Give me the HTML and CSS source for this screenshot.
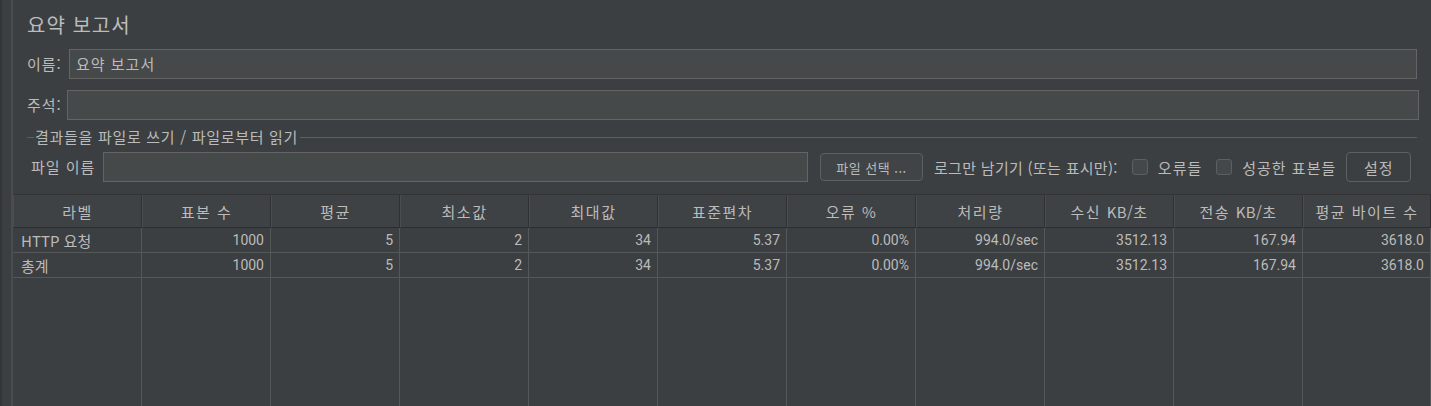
FILE: index.html
```html
<!DOCTYPE html>
<html lang="ko">
<head>
<meta charset="utf-8">
<title>요약 보고서</title>
<link rel="stylesheet" href="styles.css">
</head>
<body>
<div class="app">
  <div class="side"></div>
  <div class="main">
    <div class="form">
      <h1 class="title">요약 보고서</h1>
      <div class="row name-row">
        <label class="lbl">이름:</label>
        <div class="input">요약 보고서</div>
      </div>
      <div class="row comment-row">
        <label class="lbl">주석:</label>
        <div class="input"></div>
      </div>
      <div class="group">
        <div class="legend"><span>결과들을 파일로 쓰기 / 파일로부터 읽기</span></div>
        <div class="row file-row">
          <label class="lbl file-lbl">파일 이름</label>
          <div class="input file-input"></div>
          <button class="btn browse">파일 선택 ...</button>
          <span class="log-lbl">로그만 남기기 (또는 표시만):</span>
          <span class="check"><span class="box"></span>오류들</span>
          <span class="check"><span class="box"></span>성공한 표본들</span>
          <button class="btn settings">설정</button>
        </div>
      </div>
    </div>
    <div class="table">
      <div class="th">라벨</div>
      <div class="th">표본 수</div>
      <div class="th">평균</div>
      <div class="th">최소값</div>
      <div class="th">최대값</div>
      <div class="th">표준편차</div>
      <div class="th">오류 %</div>
      <div class="th">처리량</div>
      <div class="th">수신 <span class="lat">KB/</span>초</div>
      <div class="th">전송 <span class="lat">KB/</span>초</div>
      <div class="th">평균 바이트 수</div>

      <div class="td l">HTTP 요청</div>
      <div class="td">1000</div>
      <div class="td">5</div>
      <div class="td">2</div>
      <div class="td">34</div>
      <div class="td">5.37</div>
      <div class="td">0.00%</div>
      <div class="td">994.0/sec</div>
      <div class="td">3512.13</div>
      <div class="td">167.94</div>
      <div class="td">3618.0</div>

      <div class="td l">총계</div>
      <div class="td">1000</div>
      <div class="td">5</div>
      <div class="td">2</div>
      <div class="td">34</div>
      <div class="td">5.37</div>
      <div class="td">0.00%</div>
      <div class="td">994.0/sec</div>
      <div class="td">3512.13</div>
      <div class="td">167.94</div>
      <div class="td">3618.0</div>

      <div class="tf"></div><div class="tf"></div><div class="tf"></div><div class="tf"></div>
      <div class="tf"></div><div class="tf"></div><div class="tf"></div><div class="tf"></div>
      <div class="tf"></div><div class="tf"></div><div class="tf"></div>
    </div>
  </div>
</div>
</body>
</html>
```
FILE: styles.css
```css
html, body {
  margin: 0;
  padding: 0;
  background: #3c3f41;
  color: #bbbbbb;
  font-family: "Noto Sans CJK KR", "Noto Sans", sans-serif;
  font-size: 15px;
  letter-spacing: 1px;
  overflow: hidden;
}
.app {
  display: flex;
  width: 1431px;
  height: 406px;
}
.side {
  width: 9px;
  flex: none;
  background: #3c3f41;
  border-left: 2px solid #333537;
  border-right: 2px solid #4a4d4f;
}
.main {
  flex: 1;
  display: flex;
  flex-direction: column;
  min-width: 0;
}
.form {
  padding: 0 12px 0 14px;
}
.title {
  margin: 0;
  font-size: 20px;
  font-weight: normal;
  line-height: 26px;
  padding-top: 12px;
  color: #bbbbbb;
}
.row {
  display: flex;
  align-items: center;
}
.lbl {
  line-height: 20px;
}
.input {
  flex: 1;
  box-sizing: border-box;
  background: #45494a;
  border: 1px solid #646464;
  height: 30px;
  line-height: 28px;
  padding-left: 6px;
  color: #bbbbbb;
}
.name-row { margin-top: 11px; }
.name-row .lbl { width: 42px; }
.name-row .input { margin-right: 2px; }
.comment-row { margin-top: 11px; }
.comment-row .lbl { width: 40px; }
.group {
  margin-top: 8px;
  margin-right: 2px;
}
.legend {
  display: flex;
  align-items: center;
  height: 18px;
  letter-spacing: 0.7px;
}
.legend::before {
  content: "";
  width: 7px;
  border-top: 1px solid #5e6060;
}
.legend::after {
  content: "";
  flex: 1;
  border-top: 1px solid #5e6060;
}
.legend span {
  padding: 0 2px 0 1px;
  line-height: 18px;
}
.file-row {
  margin-top: 6px;
  padding-left: 4px;
  margin-right: -7px;
}
.file-lbl { width: 72px; }
.file-input {
  flex: 0 0 705px;
}
.btn {
  font-family: inherit;
  color: #bbbbbb;
  background: #3c3f41;
  border: 1px solid #5e6060;
  border-radius: 4px;
  box-sizing: border-box;
  padding: 0;
  cursor: pointer;
}
.browse {
  margin-left: 12px;
  width: 103px;
  height: 28px;
  font-size: 13px;
  background: #404446;
  letter-spacing: 0.5px;
}
.log-lbl {
  margin-left: 11px;
  white-space: nowrap;
  letter-spacing: 0.3px;
}
.check {
  display: flex;
  align-items: center;
  margin-left: 14px;
  white-space: nowrap;
}
.box {
  width: 16px;
  height: 16px;
  box-sizing: border-box;
  border: 1px solid #5e6060;
  border-radius: 3px;
  background: #43494a;
  margin-right: 10px;
}
.settings {
  margin-left: 10px;
  width: 65px;
  height: 30px;
  font-size: 15px;
  letter-spacing: 1px;
}
.table {
  margin-top: 12px;
  flex: 1;
  display: grid;
  grid-template-columns: repeat(10, 129px) 1fr;
  grid-template-rows: 33px 25px 25px 1fr;
  border-top: 1px solid #323436;
}
.th {
  background: #3f4244;
  border-right: 1px solid #2f3133;
  border-left: 1px solid #4b4e50;
  border-bottom: 1px solid #2b2d2f;
  display: flex;
  align-items: center;
  justify-content: center;
  letter-spacing: 1.5px;
  white-space: pre;
}
.th .lat {
  letter-spacing: 0.3px;
}
.td {
  border-right: 1px solid #555859;
  border-bottom: 1px solid #555859;
  display: flex;
  align-items: center;
  justify-content: flex-end;
  padding-right: 6px;
  box-sizing: border-box;
  font-family: Roboto, "Noto Sans CJK KR", sans-serif;
  font-size: 14px;
  letter-spacing: 0;
}
.td.l {
  justify-content: flex-start;
  padding-left: 8px;
  font-family: "Noto Sans CJK KR", sans-serif;
  font-size: 15px;
}
.tf {
  border-right: 1px solid #555859;
}
```
